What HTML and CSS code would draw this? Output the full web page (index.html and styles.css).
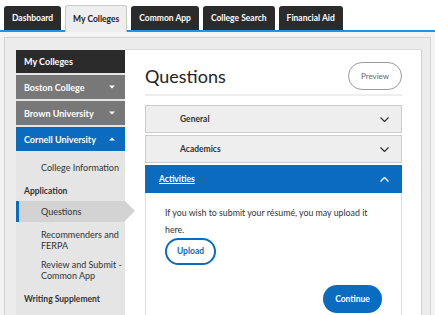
FILE: index.html
```html
<!DOCTYPE html>
<html lang="en">
<head>
    <meta charset="UTF-8">
    <meta name="viewport" content="width=device-width, initial-scale=1.0">
    <title>My Colleges - Questions</title>
    <link rel="stylesheet" href="styles.css">
</head>
<body>
    <nav class="tabs">
        <a class="tab">Dashboard</a>
        <a class="tab active">My Colleges</a>
        <a class="tab">Common App</a>
        <a class="tab">College Search</a>
        <a class="tab">Financial Aid</a>
    </nav>

    <div class="frame">
        <div class="panel">
            <aside class="sidebar">
                <div class="side-title">My Colleges</div>
                <div class="college">
                    <span>Boston College</span>
                    <svg class="caret" width="6" height="4" viewBox="0 0 6 4"><path d="M0 0.5h6L3 3.5z" fill="#fff"/></svg>
                </div>
                <div class="college">
                    <span>Brown University</span>
                    <svg class="caret" width="6" height="4" viewBox="0 0 6 4"><path d="M0 0.5h6L3 3.5z" fill="#fff"/></svg>
                </div>
                <div class="college open">
                    <span>Cornell University</span>
                    <svg class="caret" width="6" height="4" viewBox="0 0 6 4"><path d="M0 3.5h6L3 0.5z" fill="#fff"/></svg>
                </div>

                <div class="sub-nav">
                    <div class="sub-link">College Information</div>
                    <div class="sub-heading">Application</div>
                    <div class="sub-link active">Questions</div>
                    <div class="sub-link">Recommenders and FERPA</div>
                    <div class="sub-link">Review and Submit - Common App</div>
                    <div class="sub-heading">Writing Supplement</div>
                </div>
            </aside>

            <main class="card">
                <div class="card-header">
                    <h1>Questions</h1>
                    <button class="btn-outline">Preview</button>
                </div>

                <div class="accordion">
                    <div class="acc-head">
                        <span class="acc-label indent">General</span>
                        <svg class="chevron" width="9" height="5" viewBox="0 0 9 5"><path d="M0.5 0.5l4 4 4-4" fill="none" stroke="#333" stroke-width="1.2"/></svg>
                    </div>
                    <div class="acc-head">
                        <span class="acc-label indent">Academics</span>
                        <svg class="chevron" width="9" height="5" viewBox="0 0 9 5"><path d="M0.5 0.5l4 4 4-4" fill="none" stroke="#333" stroke-width="1.2"/></svg>
                    </div>
                    <div class="acc-head open">
                        <a class="acc-label">Activities</a>
                        <svg class="chevron" width="9" height="5" viewBox="0 0 9 5"><path d="M0.5 4.5l4-4 4 4" fill="none" stroke="#fff" stroke-width="1.4"/></svg>
                    </div>
                    <div class="acc-body">
                        <p>If you wish to submit your résumé, you may upload it here.</p>
                        <button class="btn-upload">Upload</button>
                        <div class="actions">
                            <button class="btn-primary">Continue</button>
                        </div>
                    </div>
                </div>
            </main>
        </div>
    </div>
</body>
</html>
```

FILE: styles.css
```css
:root {
    --dark: #2b2b2b;
    --blue: #0b6bbf;
    --line-blue: #2194dc;
    --border: #d3d3d3;
    --panel-bg: #ececec;
    --side-bg: #e5e5e5;
    --text: #333333;
}

body {
    margin: 0;
    font-family: Lato, "Open Sans", sans-serif;
    color: var(--text);
    background: #ffffff;
}

.tabs {
    display: flex;
    gap: 4px;
    padding: 6px 0 0 4px;
    border-bottom: 2px solid var(--line-blue);
    height: 24px;
}

.tab {
    display: block;
    height: 24px;
    line-height: 24px;
    padding: 0 8px;
    background: var(--dark);
    color: #ffffff;
    font-size: 8.5px;
    font-weight: 700;
    border-radius: 3px 3px 0 0;
}

.tab.active {
    height: 26px;
    padding: 0 7px;
    background: #eeeeee;
    color: #222222;
    border: 1px solid #c9c9c9;
    border-bottom: none;
    margin-top: -1px;
    line-height: 26px;
    position: relative;
    z-index: 1;
}

.frame {
    background: #f3f3f3;
    padding: 5px 4px 0 4px;
}

.panel {
    display: flex;
    background: var(--panel-bg);
    border: 1px solid var(--border);
    border-bottom: none;
    padding: 12px 8px 0 11px;
}

/* sidebar */

.sidebar {
    width: 109px;
    flex-shrink: 0;
    background: var(--side-bg);
    font-size: 9px;
    padding-bottom: 20px;
}

.side-title,
.college {
    height: 23px;
    line-height: 23px;
    padding: 0 8px;
    color: #ffffff;
    font-weight: 700;
}

.side-title {
    background: var(--dark);
}

.college {
    display: flex;
    align-items: center;
    justify-content: space-between;
    height: 24px;
    margin-top: 2px;
    background: #787878;
    padding-right: 10px;
}

.college.open {
    background: var(--blue);
}

.sub-nav {
    padding-top: 7px;
}

.sub-link {
    padding: 4px 0 4px 25px;
    line-height: 11px;
}

.sub-link.active {
    position: relative;
    padding: 5px 0 5px 22px;
    margin-bottom: 3px;
    background: #d3d3d3;
    border-left: 3px solid var(--blue);
}

.sub-link.active::after {
    content: "";
    position: absolute;
    top: 0;
    left: 106px;
    border-left: 10px solid #d3d3d3;
    border-top: 10.5px solid transparent;
    border-bottom: 10.5px solid transparent;
}

.sub-heading {
    padding: 9px 8px 4px 8px;
    line-height: 11px;
    font-size: 8.5px;
    font-weight: 700;
}

/* main card */

.card {
    flex: 1;
    background: #ffffff;
    border-top: 1px solid #dddddd;
    border-right: 1px solid var(--border);
    margin-top: -1px;
    padding: 12px 19px 20px 20px;
}

.card-header {
    display: flex;
    justify-content: space-between;
    align-items: flex-start;
    padding-bottom: 4px;
    border-bottom: 2px solid #eeeeee;
}

h1 {
    margin: 3px 0 0 0;
    font-size: 18px;
    font-weight: 400;
    line-height: 22px;
    color: #222222;
}

button {
    font-family: inherit;
    cursor: pointer;
}

.btn-outline {
    width: 54px;
    height: 28px;
    border: 1px solid #9a9a9a;
    border-radius: 14px;
    background: #ffffff;
    color: #666666;
    font-size: 8px;
}

.accordion {
    margin-top: 9px;
}

.acc-head {
    display: flex;
    align-items: center;
    justify-content: space-between;
    height: 26px;
    margin-bottom: 2px;
    padding: 0 12px 0 13px;
    background: #eeeeee;
    border: 1px solid #cccccc;
    font-size: 8.5px;
    font-weight: 700;
}

.acc-label.indent {
    padding-left: 21px;
}

.acc-head.open {
    margin-bottom: 0;
    background: var(--blue);
    border-color: var(--blue);
    color: #ffffff;
}

.acc-head.open .acc-label {
    text-decoration: underline;
}

.acc-body {
    border: 1px solid #dddddd;
    border-top: none;
    padding: 11px 19px 20px 19px;
}

.acc-body p {
    margin: 0;
    font-size: 8.8px;
    line-height: 17px;
}

.btn-upload {
    margin-top: -1px;
    width: 51px;
    height: 27px;
    border: 2px solid var(--blue);
    border-radius: 14px;
    background: #ffffff;
    color: var(--blue);
    font-size: 8.5px;
    font-weight: 700;
}

.actions {
    display: flex;
    justify-content: flex-end;
    margin-top: 20px;
}

.btn-primary {
    width: 59px;
    height: 28px;
    border: none;
    border-radius: 14px;
    background: var(--blue);
    color: #ffffff;
    font-size: 8.5px;
    font-weight: 700;
}
```
